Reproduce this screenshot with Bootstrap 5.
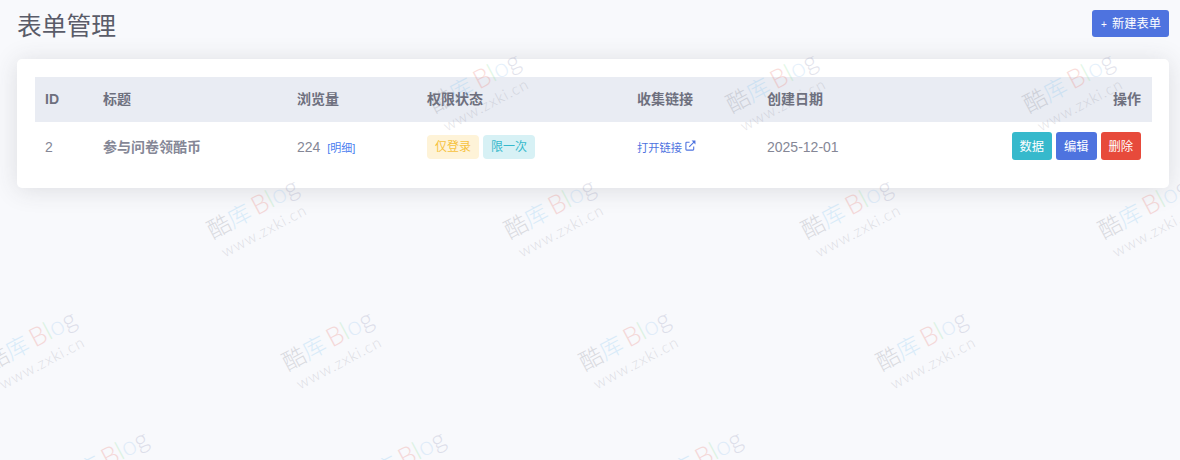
<!DOCTYPE html>
<html lang="zh-CN">
<head>
<meta charset="utf-8">
<title>表单管理</title>
<link rel="stylesheet" href="https://cdn.jsdelivr.net/npm/bootstrap@5.3.0/dist/css/bootstrap.min.css">
<style>
html,body{height:100%;}
body{background:#f8f9fc;color:#858796;font-family:"Liberation Sans","Noto Sans CJK SC",sans-serif;font-size:14px;overflow:hidden;position:relative;}
.page-wrap{padding:10px 11px 0 17px;}
.page-title{font-size:24.75px;font-weight:400;color:#5a5c69;line-height:33px;margin:0;}
.new-btn{background:#4e73df;color:#fff;font-size:12.25px;line-height:17px;padding:6px 7px 4px 8px;border-radius:3px;border:0;height:27px;width:77px;white-space:nowrap;}
.new-btn .plus{font-size:10px;margin-right:5px;}
.form-panel{margin-top:16px;padding:18px 17px 18px 18px;background:#fff;border:0;border-radius:5px;box-shadow:0 2px 24px rgba(58,59,69,.15);height:129px;}
.data-table{table-layout:fixed;width:100%;margin:0;color:#858796;font-size:14px;}
.data-table th{background:#e9ecf3;color:#6e707e;font-weight:700;height:45px;padding:0 11px 0 10px;vertical-align:middle;border:0;box-shadow:none;}
.data-table td{height:48px;padding:2px 11px 0 10px;vertical-align:middle;border:0;background:transparent;color:#858796;box-shadow:none;}
.data-table td.act-cell{padding-top:0;}
.col-id{width:58px}.col-title{width:194px}.col-views{width:130px}.col-auth{width:210px}.col-link{width:130px}.col-date{width:200px}
.form-name{font-weight:700;color:#5a5c69;}
.detail-link{color:#4a7df0;font-size:11px;text-decoration:none;margin-left:3px;}
.tag-chip{display:inline-block;font-size:12px;font-weight:400;line-height:16px;padding:4px 8px;border-radius:4px;}
.tag-row{display:flex;gap:4px;}
.tag-warn{background:#fef3d8;color:#f6c23e;}
.tag-info{background:#d7f1f5;color:#36b9cc;}
.open-link{color:#4e73df;font-size:11.25px;text-decoration:none;}
.open-link svg{vertical-align:1px;margin-left:3px;}
.act-row{display:flex;justify-content:flex-end;gap:4px;}
.act-btn{font-size:12.25px;line-height:16px;padding:7px 8px 5px;border:0;border-radius:3px;color:#fff;height:28px;}
.act-data{background:#36b9cc}.act-edit{background:#4e73df}.act-del{background:#e74a3b}
.mark-layer{position:absolute;inset:0;overflow:hidden;pointer-events:none;z-index:5;}
.mark-item{position:absolute;width:140px;height:70px;transform:rotate(-28deg);transform-origin:0 0;opacity:.22;}
.mark-head{display:block;font-family:Lato,"Noto Sans CJK SC",sans-serif;font-size:23px;font-weight:300;line-height:26px;white-space:nowrap;}
.mark-head .gap{display:inline-block;width:4px;}
.mark-latin{font-size:26px;}
.mark-sub{display:block;font-family:Lato,sans-serif;font-weight:300;font-size:15.5px;line-height:16px;white-space:nowrap;letter-spacing:1px;color:#7f8190;margin-left:2px;margin-top:4px;}
.c-gray{color:#70727f}.c-blue{color:#6dbcf0}.c-red{color:#e9685d}.c-green{color:#7fdc8c}.c-sky{color:#8cc0f0}.c-slate{color:#7c80a8}
</style>
</head>
<body>
<div class="page-wrap">
  <div class="d-flex justify-content-between align-items-start">
    <h3 class="page-title">表单管理</h3>
    <button class="btn new-btn" type="button"><span class="plus">+</span>新建表单</button>
  </div>
  <div class="card form-panel">
    <table class="table data-table">
      <colgroup><col class="col-id"><col class="col-title"><col class="col-views"><col class="col-auth"><col class="col-link"><col class="col-date"><col></colgroup>
      <thead>
        <tr><th>ID</th><th>标题</th><th>浏览量</th><th>权限状态</th><th>收集链接</th><th>创建日期</th><th class="text-end">操作</th></tr>
      </thead>
      <tbody>
        <tr>
          <td>2</td>
          <td class="form-name">参与问卷领酷币</td>
          <td>224 <a class="detail-link" href="#">[明细]</a></td>
          <td><div class="tag-row"><span class="tag-chip tag-warn">仅登录</span><span class="tag-chip tag-info">限一次</span></div></td>
          <td><a class="open-link" href="#">打开链接<svg width="11" height="11" viewBox="0 0 12 12" fill="none" stroke="#4e73df" stroke-width="1.2"><path d="M9.5 7v3.2a.8.8 0 0 1-.8.8H1.8a.8.8 0 0 1-.8-.8V3.3a.8.8 0 0 1 .8-.8H5"/><path d="M4.6 7.4 10 2"/><path d="M7.2 .6h4.2v4.2z" fill="#4e73df" stroke="none"/></svg></a></td>
          <td>2025-12-01</td>
          <td class="act-cell"><div class="act-row"><button class="btn act-btn act-data" type="button">数据</button><button class="btn act-btn act-edit" type="button">编辑</button><button class="btn act-btn act-del" type="button">删除</button></div></td>
        </tr>
      </tbody>
    </table>
  </div>
</div>
<div class="mark-layer" id="marks"></div>
<script src="https://cdn.jsdelivr.net/npm/bootstrap@5.3.0/dist/js/bootstrap.bundle.min.js"></script>
<script>
var spots=[[424,93],[721,93],[1018,93],[202,219],[499,219],[796,219],[1093,219],[-20,351],[277,351],[574,351],[871,351],[52,471],[349,471],[646,471]];
var html='';
spots.forEach(function(p){
  html+='<div class="mark-item" style="left:'+p[0]+'px;top:'+p[1]+'px"><span class="mark-head"><span class="c-gray">酷</span><span class="c-blue">库</span><span class="gap"></span><span class="mark-latin"><span class="c-red">B</span><span class="c-green">l</span><span class="c-sky">o</span><span class="c-slate">g</span></span></span><span class="mark-sub">www.zxki.cn</span></div>';
});
document.getElementById('marks').innerHTML=html;
</script>
</body>
</html>
